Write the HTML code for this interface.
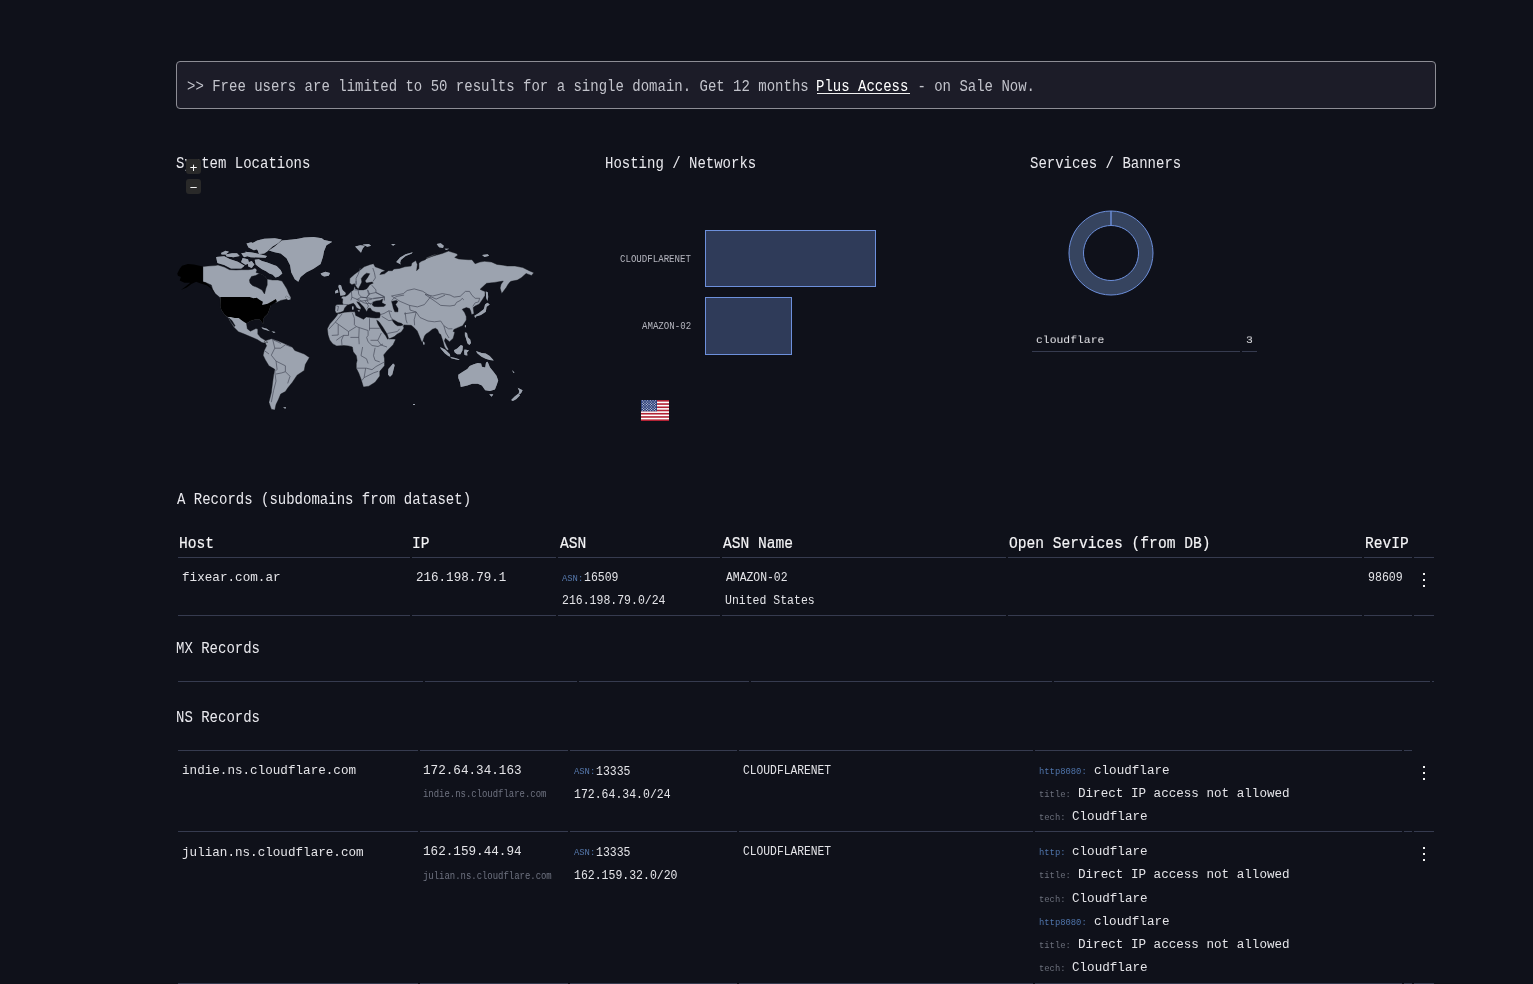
<!DOCTYPE html>
<html><head><meta charset="utf-8"><style>
html,body{margin:0;padding:0;background:#0f111a;width:1533px;height:984px;overflow:hidden;}
body{position:relative;font-family:"Liberation Mono",monospace;}
.t{position:absolute;white-space:pre;line-height:normal;will-change:transform;}
.l{position:absolute;}
.abs{position:absolute;}
.banner{position:absolute;left:176px;top:61px;width:1258px;height:46px;border:1px solid #8d8d95;border-radius:4px;background:#1c1c28;}
.bar{position:absolute;box-sizing:border-box;border:1px solid #6d90dc;background:#2f3b59;}
.zb{position:absolute;width:15px;height:15px;border-radius:3px;background:#292929;color:#fff;font-family:"Liberation Sans",sans-serif;font-size:13px;line-height:17px;text-align:center;z-index:5;}
</style></head><body>
<div class="banner"></div>
<svg class="abs" style="left:0;top:0" width="1533" height="984" viewBox="0 0 1533 984"><path d="M337.7,313.0 L336.1,313.0 L335.0,310.7 L335.3,306.0 L336.9,304.4 L343.2,304.4 L342.4,302.8 L342.8,298.9 L340.8,298.1 L342.8,296.2 L345.7,296.2 L347.7,295.1 L350.9,291.7 L353.5,289.9 L354.5,286.3 L355.3,287.5 L355.1,288.4 L358.2,289.7 L357.1,288.9 L359.2,289.9 L363.4,289.9 L366.5,288.9 L367.6,287.8 L369.7,284.7 L373.3,283.1 L371.8,282.1 L366.5,283.1 L365.0,281.0 L367.6,277.4 L369.7,273.7 L366.5,273.2 L363.9,275.3 L361.3,278.4 L361.8,282.1 L360.3,285.2 L358.2,289.2 L356.5,287.0 L355.6,285.7 L354.5,283.7 L351.9,284.7 L349.6,283.1 L349.8,278.4 L354.5,274.3 L359.4,270.7 L364.1,266.8 L370.4,264.4 L373.5,263.7 L375.1,266.8 L379.8,268.4 L385.3,270.7 L381.4,272.3 L379.8,274.6 L384.5,273.8 L388.4,270.7 L392.3,270.7 L393.9,269.1 L399.4,268.4 L404.8,266.8 L411.1,266.0 L411.9,262.9 L415.8,260.5 L417.4,264.4 L416.6,270.7 L418.9,268.4 L418.9,262.9 L421.3,261.3 L425.2,259.7 L426.8,257.4 L433.0,255.0 L438.5,253.5 L425.0,259.0 L431.3,256.6 L436.7,255.0 L442.2,253.5 L448.5,251.1 L456.3,253.5 L457.9,255.0 L454.7,257.4 L458.7,259.0 L468.1,259.7 L472.0,259.7 L475.1,263.7 L479.8,262.1 L484.5,261.3 L491.5,262.1 L497.0,264.4 L503.3,265.2 L507.2,266.0 L515.0,266.0 L522.8,267.6 L529.1,270.7 L533.8,272.7 L531.5,275.4 L526.0,273.4 L523.6,275.8 L521.3,277.7 L517.4,280.1 L511.1,281.3 L510.0,282.0 L508.0,284.5 L506.4,287.3 L504.0,290.5 L501.7,293.6 L500.1,288.1 L501.0,284.5 L503.3,281.0 L500.0,281.6 L494.7,282.4 L486.6,283.3 L480.1,289.3 L482.5,290.6 L485.0,291.4 L485.0,295.4 L482.5,299.5 L479.3,304.0 L475.2,306.0 L473.2,307.6 L473.6,310.9 L474.0,313.7 L471.5,314.6 L470.7,310.9 L469.5,308.5 L466.3,307.6 L462.2,309.3 L464.6,312.5 L466.3,316.6 L466.3,320.0 L465.7,321.0 L462.6,325.7 L458.4,327.4 L453.9,329.5 L453.1,331.5 L454.8,331.9 L453.9,335.6 L453.1,338.4 L449.5,341.7 L447.4,340.0 L445.4,338.2 L444.4,340.8 L447.0,346.5 L448.7,349.4 L447.4,350.2 L445.9,349.0 L444.4,346.5 L442.8,340.8 L440.7,334.5 L439.1,333.5 L437.6,329.8 L435.5,328.3 L432.4,329.3 L429.2,331.9 L426.1,334.0 L424.5,336.1 L422.4,342.4 L421.4,341.3 L419.3,336.1 L417.2,330.9 L415.7,329.3 L413.0,326.7 L411.1,325.3 L404.0,324.9 L403.3,326.4 L404.0,328.0 L401.3,331.9 L397.4,333.9 L394.3,336.6 L388.8,339.0 L394.3,339.0 L395.6,339.6 L393.1,344.7 L387.6,350.2 L383.7,354.9 L384.5,358.8 L384.5,365.8 L379.8,371.3 L379.8,376.0 L375.1,382.3 L368.8,386.2 L363.4,387.0 L361.0,379.1 L358.7,372.9 L356.3,368.2 L356.3,363.5 L357.1,360.4 L356.3,355.7 L353.2,351.7 L352.4,347.0 L348.5,345.9 L343.8,345.5 L336.7,345.9 L332.8,343.9 L329.7,340.0 L328.1,335.1 L327.3,328.8 L329.7,324.1 L334.4,318.7 L337.5,314.7Z M202.9,266.6 L208.0,266.0 L215.0,265.6 L218.0,265.0 L224.4,267.1 L229.6,269.7 L236.0,270.0 L242.0,269.7 L248.4,269.7 L252.6,269.2 L255.0,268.0 L257.0,270.0 L256.0,272.5 L259.4,273.4 L262.0,274.4 L265.0,276.5 L267.2,279.0 L272.4,280.0 L278.0,280.0 L282.0,281.0 L284.5,285.0 L287.0,289.0 L288.5,293.0 L291.2,298.1 L286.5,299.3 L280.7,300.4 L276.0,302.8 L273.9,300.7 L270.8,305.4 L269.2,310.0 L267.6,314.0 L264.5,317.1 L263.1,319.4 L263.3,324.1 L261.4,321.8 L259.8,319.4 L255.1,319.4 L250.4,321.0 L246.5,323.4 L247.3,328.8 L250.4,331.2 L255.9,328.5 L257.8,329.0 L257.8,334.1 L260.7,337.6 L264.8,340.0 L267.8,342.3 L264.0,343.0 L261.9,342.5 L257.2,339.5 L251.3,337.0 L244.3,334.1 L238.4,331.7 L233.7,327.0 L229.2,320.0 L228.5,317.9 L224.6,314.7 L221.4,310.0 L220.3,306.1 L219.9,297.5 L215.2,293.6 L212.8,289.7 L211.3,285.0 L206.1,282.8 L202.9,281.7Z M264.2,341.1 L271.3,338.8 L278.3,341.1 L284.2,343.5 L292.4,347.2 L294.8,350.5 L304.2,354.0 L309.4,357.6 L305.3,364.6 L304.2,370.5 L297.1,375.2 L292.4,382.2 L287.7,388.1 L285.4,391.6 L280.7,394.0 L278.3,399.8 L276.0,404.5 L274.8,410.1 L271.3,409.2 L268.9,402.2 L271.3,392.8 L272.5,383.4 L273.6,375.2 L274.8,369.3 L268.9,365.8 L265.4,359.9 L263.1,355.2 L264.2,350.5 L266.6,345.8Z" fill="#9ca3af" stroke="#0c0e15" stroke-width="0.4"/><path d="M337.7,313.0 L340.8,312.3 L343.6,311.0 L344.7,307.9 L347.1,305.2 L351.0,304.0 L353.4,303.2 L354.9,304.8 L356.5,307.5 L358.8,309.1 L360.6,309.5 L361.0,307.8 L358.0,303.5 L356.8,301.7 L359.0,302.3 L363.5,306.7 L365.1,309.1 L366.7,311.8 L368.2,308.5 L370.2,308.0 L372.1,310.7 L376.0,312.2 L379.6,312.6 L380.4,314.6 L379.6,317.7 L376.0,318.1 L372.1,317.7 L366.3,316.9 L363.5,319.3 L360.4,317.7 L355.7,315.4 L354.9,311.8 L350.6,311.8 L344.7,312.2 L338.9,313.8Z M372.1,304.8 L373.3,302.0 L376.0,300.9 L380.0,300.5 L382.7,298.9 L381.9,302.8 L385.8,304.8 L383.9,306.4 L378.0,306.7 L374.1,306.4Z M391.6,301.4 L396.3,300.4 L397.8,301.4 L395.6,304.5 L398.0,308.5 L398.0,311.8 L394.8,311.8 L393.3,307.9 L392.5,304.6Z M376.7,320.2 L379.0,321.7 L382.9,327.2 L387.2,334.3 L388.6,338.4 L387.6,339.2 L385.7,335.8 L381.7,330.4 L377.8,323.7Z M391.9,319.4 L394.3,320.2 L398.2,322.5 L401.3,323.3 L403.3,324.9 L400.5,325.7 L397.4,325.7 L395.0,324.1 L393.1,321.7Z M249.4,280.0 L251.5,276.5 L255.7,275.5 L259.4,273.4 L262.0,274.4 L265.0,276.5 L267.2,279.0 L267.2,285.0 L266.0,288.0 L264.5,294.0 L262.0,290.0 L257.5,287.5 L252.5,285.5 L250.0,283.0Z M232.0,320.6 L235.1,325.7 L234.4,326.5 L230.8,321.8 L228.9,317.9Z" fill="#0f111a" stroke="#0c0e15" stroke-width="0.4"/><path d="M216.1,257.0 L224.2,256.2 L229.6,258.9 L237.8,261.7 L244.6,265.7 L241.2,268.4 L231.0,268.4 L224.2,265.0 L217.4,263.1Z M225.4,254.5 L232.1,253.2 L237.0,253.2 L239.7,255.9 L233.6,257.2 L226.7,256.5Z M221.0,253.0 L225.6,250.7 L229.0,251.7 L225.6,254.5 L221.6,254.5Z M241.2,253.3 L246.8,252.5 L248.1,256.0 L244.0,257.3Z M242.6,258.0 L248.0,259.3 L249.3,263.4 L245.3,264.8 L241.1,262.0Z M247.7,262.5 L251.7,261.1 L254.4,264.5 L251.7,267.9 L248.3,266.6Z M245.3,251.7 L252.0,252.4 L267.0,255.9 L265.6,257.8 L250.6,257.2 L246.6,255.9Z M246.5,243.6 L251.2,242.2 L256.7,244.9 L258.1,249.0 L253.9,250.3 L248.5,247.6Z M252.5,242.9 L257.2,240.6 L264.2,238.8 L274.8,238.2 L281.8,239.4 L278.3,242.9 L272.5,246.4 L267.8,251.1 L264.2,253.5 L259.0,254.0 L257.5,250.0 L253.0,247.0Z M254.7,259.8 L258.8,259.3 L262.0,260.9 L267.2,262.4 L272.4,264.5 L276.6,266.1 L280.8,270.3 L282.3,273.4 L278.7,276.5 L275.5,277.6 L272.4,274.4 L269.3,273.4 L266.1,271.3 L262.0,269.2 L258.8,267.1 L255.7,264.5Z M268.9,250.5 L274.8,246.4 L281.8,240.6 L292.4,239.4 L298.3,238.8 L304.2,237.6 L313.5,237.0 L321.8,238.2 L324.1,240.0 L332.3,241.7 L326.5,245.3 L324.1,251.1 L322.9,257.0 L320.6,264.0 L313.5,268.7 L306.5,272.3 L300.6,277.0 L298.3,281.7 L294.8,279.3 L291.2,272.3 L290.1,265.2 L286.5,258.2 L280.7,253.5 L274.8,252.3Z M320.6,273.4 L325.3,271.7 L330.0,272.9 L328.8,275.8 L324.1,276.4 L321.8,275.2Z M286.4,296.0 L291.1,299.1 L288.0,300.0 L285.6,297.5Z M261.4,327.3 L266.8,328.8 L270.0,331.3 L267.6,330.6 L262.9,329.0Z M271.5,331.2 L275.5,332.0 L273.9,332.9Z M338.9,284.7 L341.0,285.2 L342.5,289.9 L345.7,293.1 L345.1,295.1 L340.4,295.7 L339.9,293.1 L339.4,289.9 L338.4,286.8Z M335.2,291.0 L337.8,289.4 L338.4,292.5 L335.2,293.6Z M352.0,306.5 L353.5,306.5 L353.5,309.5 L352.0,309.5Z M357.5,310.3 L360.0,310.5 L359.0,311.8Z M355.1,246.4 L360.2,245.3 L364.9,245.7 L362.6,248.8 L361.0,252.7 L357.9,249.6Z M362.6,244.5 L368.8,244.1 L371.2,245.7 L367.3,246.8Z M396.2,262.1 L400.1,257.4 L405.6,254.3 L412.7,252.3 L411.9,253.5 L405.6,256.0 L400.9,259.9 L400.1,262.9 L400.9,264.4Z M436.7,244.1 L440.7,243.3 L443.8,245.7 L443.0,248.0 L439.1,247.2Z M444.6,248.8 L449.3,248.8 L446.1,250.0Z M482.1,255.0 L487.6,254.3 L489.2,255.8 L484.5,257.0Z M391.1,244.1 L395.5,244.1 L393.1,245.7Z M485.0,304.4 L487.4,302.8 L489.8,304.4 L486.6,306.8 L485.8,311.7 L480.9,315.0 L476.0,316.6 L475.2,318.2 L474.4,315.8 L478.5,313.3 L483.7,309.3 L484.6,306.4Z M485.8,291.4 L487.8,292.2 L488.2,297.1 L487.4,301.1 L486.2,297.9Z M465.0,325.0 L466.1,325.4 L465.7,327.8 L464.8,326.5Z M464.9,332.3 L467.0,333.1 L467.8,337.2 L470.2,339.6 L471.0,342.9 L469.4,344.9 L467.4,343.3 L465.7,337.6 L464.9,335.6Z M422.8,341.3 L424.4,342.4 L424.6,344.5 L423.2,344.5Z M458.3,374.8 L463.2,371.6 L467.3,369.1 L469.7,365.9 L473.8,364.3 L477.8,363.0 L481.1,363.5 L481.9,366.7 L485.2,367.5 L486.0,362.6 L487.6,361.8 L490.0,367.5 L493.3,371.6 L496.5,375.7 L498.2,380.5 L496.5,385.4 L494.9,389.5 L490.0,391.1 L485.2,390.3 L481.9,385.4 L477.8,383.8 L472.2,383.8 L467.3,385.4 L460.8,387.0 L460.0,382.2 L458.3,378.1Z M489.2,394.3 L493.3,394.3 L491.7,396.8Z M517.7,387.8 L522.6,390.3 L520.9,393.5 L518.5,394.3 L519.3,391.1Z M511.2,400.0 L514.4,396.8 L518.5,393.5 L520.1,395.2 L516.1,399.2 L512.8,400.9Z M475.9,351.0 L481.6,353.0 L485.7,353.5 L489.7,355.9 L493.8,360.4 L489.7,360.0 L485.7,358.7 L481.6,356.7 L477.5,353.5Z M453.9,350.2 L457.2,348.6 L460.9,344.9 L462.9,346.1 L462.5,350.2 L460.4,354.3 L457.2,354.3 L454.8,352.6Z M445.0,349.4 L447.4,351.8 L449.9,354.3 L450.3,356.7 L448.3,355.9 L445.0,353.5 L441.0,349.0 L440.0,347.0Z M450.7,357.1 L455.2,357.9 L459.6,359.6 L458.8,360.0 L453.1,358.7 L450.7,357.9Z M464.5,349.4 L469.0,350.2 L467.0,352.6 L467.4,355.5 L464.5,355.1 L464.1,351.8Z M388.4,369.0 L393.1,363.5 L394.7,365.0 L392.3,374.4 L390.0,376.8 L388.0,374.4Z M283.0,407.5 L286.0,406.9 L285.4,408.8Z M413.0,404.0 L415.0,404.0 L415.0,405.0 L413.0,405.0Z M512.0,370.0 L514.5,372.5 L513.5,373.0Z" fill="#9ca3af" stroke="#0c0e15" stroke-width="0.4"/><path d="M216.1,257.0 L224.2,256.2 L229.6,258.9 L237.8,261.7 L244.6,265.7 L241.2,268.4 L231.0,268.4 L224.2,265.0 L217.4,263.1Z M225.4,254.5 L232.1,253.2 L237.0,253.2 L239.7,255.9 L233.6,257.2 L226.7,256.5Z M221.0,253.0 L225.6,250.7 L229.0,251.7 L225.6,254.5 L221.6,254.5Z M241.2,253.3 L246.8,252.5 L248.1,256.0 L244.0,257.3Z M242.6,258.0 L248.0,259.3 L249.3,263.4 L245.3,264.8 L241.1,262.0Z M247.7,262.5 L251.7,261.1 L254.4,264.5 L251.7,267.9 L248.3,266.6Z M245.3,251.7 L252.0,252.4 L267.0,255.9 L265.6,257.8 L250.6,257.2 L246.6,255.9Z M246.5,243.6 L251.2,242.2 L256.7,244.9 L258.1,249.0 L253.9,250.3 L248.5,247.6Z M252.5,242.9 L257.2,240.6 L264.2,238.8 L274.8,238.2 L281.8,239.4 L278.3,242.9 L272.5,246.4 L267.8,251.1 L264.2,253.5 L259.0,254.0 L257.5,250.0 L253.0,247.0Z M254.7,259.8 L258.8,259.3 L262.0,260.9 L267.2,262.4 L272.4,264.5 L276.6,266.1 L280.8,270.3 L282.3,273.4 L278.7,276.5 L275.5,277.6 L272.4,274.4 L269.3,273.4 L266.1,271.3 L262.0,269.2 L258.8,267.1 L255.7,264.5Z M268.9,250.5 L274.8,246.4 L281.8,240.6 L292.4,239.4 L298.3,238.8 L304.2,237.6 L313.5,237.0 L321.8,238.2 L324.1,240.0 L332.3,241.7 L326.5,245.3 L324.1,251.1 L322.9,257.0 L320.6,264.0 L313.5,268.7 L306.5,272.3 L300.6,277.0 L298.3,281.7 L294.8,279.3 L291.2,272.3 L290.1,265.2 L286.5,258.2 L280.7,253.5 L274.8,252.3Z M320.6,273.4 L325.3,271.7 L330.0,272.9 L328.8,275.8 L324.1,276.4 L321.8,275.2Z M286.4,296.0 L291.1,299.1 L288.0,300.0 L285.6,297.5Z M261.4,327.3 L266.8,328.8 L270.0,331.3 L267.6,330.6 L262.9,329.0Z M271.5,331.2 L275.5,332.0 L273.9,332.9Z M338.9,284.7 L341.0,285.2 L342.5,289.9 L345.7,293.1 L345.1,295.1 L340.4,295.7 L339.9,293.1 L339.4,289.9 L338.4,286.8Z M335.2,291.0 L337.8,289.4 L338.4,292.5 L335.2,293.6Z M352.0,306.5 L353.5,306.5 L353.5,309.5 L352.0,309.5Z M357.5,310.3 L360.0,310.5 L359.0,311.8Z M355.1,246.4 L360.2,245.3 L364.9,245.7 L362.6,248.8 L361.0,252.7 L357.9,249.6Z M362.6,244.5 L368.8,244.1 L371.2,245.7 L367.3,246.8Z M396.2,262.1 L400.1,257.4 L405.6,254.3 L412.7,252.3 L411.9,253.5 L405.6,256.0 L400.9,259.9 L400.1,262.9 L400.9,264.4Z M436.7,244.1 L440.7,243.3 L443.8,245.7 L443.0,248.0 L439.1,247.2Z M444.6,248.8 L449.3,248.8 L446.1,250.0Z M482.1,255.0 L487.6,254.3 L489.2,255.8 L484.5,257.0Z M391.1,244.1 L395.5,244.1 L393.1,245.7Z M485.0,304.4 L487.4,302.8 L489.8,304.4 L486.6,306.8 L485.8,311.7 L480.9,315.0 L476.0,316.6 L475.2,318.2 L474.4,315.8 L478.5,313.3 L483.7,309.3 L484.6,306.4Z M485.8,291.4 L487.8,292.2 L488.2,297.1 L487.4,301.1 L486.2,297.9Z M465.0,325.0 L466.1,325.4 L465.7,327.8 L464.8,326.5Z M464.9,332.3 L467.0,333.1 L467.8,337.2 L470.2,339.6 L471.0,342.9 L469.4,344.9 L467.4,343.3 L465.7,337.6 L464.9,335.6Z M422.8,341.3 L424.4,342.4 L424.6,344.5 L423.2,344.5Z M458.3,374.8 L463.2,371.6 L467.3,369.1 L469.7,365.9 L473.8,364.3 L477.8,363.0 L481.1,363.5 L481.9,366.7 L485.2,367.5 L486.0,362.6 L487.6,361.8 L490.0,367.5 L493.3,371.6 L496.5,375.7 L498.2,380.5 L496.5,385.4 L494.9,389.5 L490.0,391.1 L485.2,390.3 L481.9,385.4 L477.8,383.8 L472.2,383.8 L467.3,385.4 L460.8,387.0 L460.0,382.2 L458.3,378.1Z M489.2,394.3 L493.3,394.3 L491.7,396.8Z M517.7,387.8 L522.6,390.3 L520.9,393.5 L518.5,394.3 L519.3,391.1Z M511.2,400.0 L514.4,396.8 L518.5,393.5 L520.1,395.2 L516.1,399.2 L512.8,400.9Z M475.9,351.0 L481.6,353.0 L485.7,353.5 L489.7,355.9 L493.8,360.4 L489.7,360.0 L485.7,358.7 L481.6,356.7 L477.5,353.5Z M453.9,350.2 L457.2,348.6 L460.9,344.9 L462.9,346.1 L462.5,350.2 L460.4,354.3 L457.2,354.3 L454.8,352.6Z M445.0,349.4 L447.4,351.8 L449.9,354.3 L450.3,356.7 L448.3,355.9 L445.0,353.5 L441.0,349.0 L440.0,347.0Z M450.7,357.1 L455.2,357.9 L459.6,359.6 L458.8,360.0 L453.1,358.7 L450.7,357.9Z M464.5,349.4 L469.0,350.2 L467.0,352.6 L467.4,355.5 L464.5,355.1 L464.1,351.8Z M388.4,369.0 L393.1,363.5 L394.7,365.0 L392.3,374.4 L390.0,376.8 L388.0,374.4Z M283.0,407.5 L286.0,406.9 L285.4,408.8Z M413.0,404.0 L415.0,404.0 L415.0,405.0 L413.0,405.0Z M512.0,370.0 L514.5,372.5 L513.5,373.0Z" fill="#9ca3af"/><path d="M177.3,273.4 L179.7,268.7 L182.0,265.8 L187.9,264.0 L193.8,264.6 L202.9,266.6 L202.9,281.7 L206.1,282.8 L210.2,286.4 L213.7,291.1 L214.9,293.4 L211.4,288.7 L206.7,285.2 L200.8,283.4 L196.1,281.7 L191.4,284.0 L186.7,287.5 L180.9,289.9 L185.6,286.4 L190.3,282.8 L184.4,282.8 L179.7,280.5 L180.9,277.0 L177.9,275.8Z M220.3,297.1 L249.6,297.1 L253.5,298.3 L256.7,297.7 L259.8,300.0 L262.9,301.8 L262.1,305.0 L267.6,303.8 L273.1,300.7 L275.8,299.1 L277.0,301.4 L273.9,303.2 L270.8,305.5 L269.2,310.0 L267.6,314.0 L264.5,317.1 L263.1,319.4 L263.3,324.1 L261.4,321.8 L259.8,319.4 L255.1,319.4 L250.4,321.0 L246.5,323.4 L242.6,321.0 L238.7,317.9 L234.7,317.9 L230.8,317.1 L227.7,317.1 L224.6,314.7 L221.4,310.0 L220.3,306.1Z" fill="#000000"/><path d="M342.1,313.9 L335.3,322.2 L328.9,329.1 M335.3,322.2 L348.5,331.5 L356.3,326.6 M352.4,312.9 L354.4,318.3 L354.4,324.7 L356.3,326.6 L359.2,327.6 L368.1,330.5 M369.5,318.3 L369.5,330.5 M369.5,328.3 L379.8,328.3 M368.1,330.5 L368.1,335.4 L366.6,337.4 L368.1,341.8 M359.2,327.6 L358.8,337.4 L359.2,344.2 M338.2,324.7 L338.2,335.0 L331.8,335.4 M348.5,331.5 L348.5,335.4 L343.6,335.4 L340.3,337.4 L336.3,340.3 M343.6,335.4 L341.5,340.0 L342.0,345.5 M350.4,337.4 L358.8,337.4 M381.3,333.0 L377.8,340.3 L370.5,340.3 M368.1,341.8 L372.0,345.5 L378.0,346.5 L383.0,344.0 M377.8,340.3 L381.0,345.0 L387.0,347.0 M362.6,347.0 L361.0,355.7 L366.5,358.8 L368.1,363.5 M356.3,368.2 L366.5,368.2 L372.0,369.7 L375.9,366.6 L384.5,361.9 M365.7,368.2 L364.1,377.6 L361.8,380.7 M364.1,377.6 L373.5,372.9 L378.2,371.3 M375.1,347.8 L373.5,355.7 L375.1,360.4 L379.8,361.9 M381.7,316.3 L388.8,320.6 L392.7,320.2 M388.8,310.8 L391.1,317.8 L393.5,319.8 M380.4,314.6 L384.0,313.5 L388.8,310.8 L392.0,311.5 M405.2,312.3 L406.0,319.8 L407.2,323.3 M416.2,312.0 L414.2,319.8 L414.6,325.3 M404.0,313.9 L409.0,313.1 L416.2,312.0 M387.2,333.5 L397.4,331.5 L399.7,328.8 M416.2,312.0 L420.0,317.5 L428.0,321.0 L434.4,321.8 M391.5,296.0 L403.3,293.6 L407.2,290.5 L414.2,288.9 L422.8,291.3 L430.7,296.7 L436.2,299.1 L445.0,295.2 M391.5,296.0 L400.1,301.4 L409.5,305.4 L417.4,306.9 L424.4,304.6 L430.7,296.7 M409.5,305.4 L410.0,310.0 L416.2,312.0 M425.0,294.4 L432.8,296.0 L442.2,293.6 L450.0,295.0 L454.1,297.1 L460.2,296.3 L465.4,291.4 L469.5,291.4 L472.0,295.4 L475.2,298.3 L479.7,298.3 L478.5,302.0 L475.2,302.8 L472.8,306.4 M425.0,294.4 L435.2,301.4 L440.7,305.4 L450.0,306.0 L454.9,305.2 L456.5,302.4 L460.6,300.3 L462.2,298.3 L463.8,299.9 M434.4,321.8 L440.7,321.0 L443.8,325.7 L448.5,328.8 L452.4,328.8 M443.8,325.7 L446.0,333.0 L449.0,338.0 M360.3,268.0 L358.2,274.3 L356.1,278.4 L356.1,283.7 L355.1,285.2 M372.8,268.0 L374.4,272.7 L375.4,277.9 L372.8,281.6 M371.8,285.2 L375.9,289.9 L375.9,292.5 L384.3,296.7 L384.3,300.4 M358.2,289.9 L358.7,294.1 L361.3,297.2 M367.6,289.9 L368.6,294.6 L366.5,297.7 M351.4,291.5 L351.9,297.2 L350.9,300.4 M361.3,297.2 L366.5,297.7 L373.0,298.8 L384.3,297.0 M343.2,304.4 L348.0,304.6 M336.5,306.0 L338.5,306.5 L337.5,311.0 M356.5,299.5 L360.0,300.0 L363.0,302.5 L366.5,303.5 L371.0,303.5 M365.0,300.5 L368.5,306.0 L367.0,308.5 M272.5,338.8 L274.8,348.2 L271.3,355.2 L276.0,361.1 L277.1,369.3 L274.8,371.7 L276.0,381.1 L273.6,390.4 L271.3,402.2 M274.8,348.2 L280.7,348.2 L285.4,344.7 L291.2,347.0 M276.0,361.1 L285.4,365.8 L285.4,371.7 L290.0,376.3 L287.7,383.4 M276.0,374.0 L281.8,372.9 L285.4,371.7 M264.2,350.5 L269.0,354.0 M273.5,340.0 L277.0,341.5 L281.0,343.5 M361.3,297.2 L366.5,297.7 L369.7,294.1 L367.6,289.9 M368.6,294.1 L375.9,292.5 M375.9,292.5 L384.3,296.7 L384.3,300.4 M351.9,297.2 L357.1,299.3 L361.3,297.2 M357.1,299.3 L359.2,301.4 L366.5,300.4 L371.8,299.3 M366.5,300.4 L370.7,304.5 L373.3,301.4 M366.5,297.7 L367.6,300.4 M373.3,298.3 L384.3,297.2 M356.1,281.0 L356.1,285.2 M354.5,289.9 L358.2,289.9 M391.6,300.4 L395.2,297.2 L397.8,296.2 L404.1,295.1" fill="none" stroke="#474c5a" stroke-width="0.7" stroke-linejoin="round"/></svg>
<div class="t" style="left:186.71px;top:79.14px;font-size:14px;color:#c2c3cb;transform:scaleY(1.17);transform-origin:0 11.66px;">&gt;&gt; Free users are limited to 50 results for a single domain. Get 12 months </div>
<div class="t" style="left:816.21px;top:79.14px;font-size:14px;color:#ffffff;transform:scaleY(1.17);transform-origin:0 11.66px;">Plus Access</div>
<div class="l" style="left:816.5px;top:93px;width:93.0px;height:1px;background:#f0f0f0"></div>
<div class="t" style="left:908.61px;top:79.14px;font-size:14px;color:#c2c3cb;transform:scaleY(1.17);transform-origin:0 11.66px;"> - on Sale Now.</div>
<div class="t" style="left:175.96px;top:156.34px;font-size:14px;color:#e9e9ee;transform:scaleY(1.17);transform-origin:0 11.66px;">System Locations</div>
<div class="t" style="left:604.69px;top:156.34px;font-size:14px;color:#e9e9ee;transform:scaleY(1.17);transform-origin:0 11.66px;">Hosting / Networks</div>
<div class="t" style="left:1030.26px;top:156.34px;font-size:14px;color:#e9e9ee;transform:scaleY(1.17);transform-origin:0 11.66px;">Services / Banners</div>
<div class="t" style="left:176.50px;top:491.64px;font-size:14px;color:#e9e9ee;transform:scaleY(1.17);transform-origin:0 11.66px;">A Records (subdomains from dataset)</div>
<div class="t" style="left:175.92px;top:641.34px;font-size:14px;color:#e9e9ee;transform:scaleY(1.17);transform-origin:0 11.66px;">MX Records</div>
<div class="t" style="left:175.69px;top:710.34px;font-size:14px;color:#e9e9ee;transform:scaleY(1.17);transform-origin:0 11.66px;">NS Records</div>
<div class="t" style="left:620.48px;top:254.02px;font-size:9.1px;color:#b3b4bd;transform:scaleY(1.15);transform-origin:0 7.58px;">CLOUDFLARENET</div>
<div class="t" style="left:642.32px;top:321.02px;font-size:9.1px;color:#b3b4bd;transform:scaleY(1.15);transform-origin:0 7.58px;">AMAZON-02</div>
<div class="bar" style="left:705px;top:230px;width:171px;height:57px"></div>
<div class="bar" style="left:705px;top:297px;width:87px;height:58px"></div>
<svg class="abs" style="left:641px;top:400px" width="28" height="21" viewBox="0 0 28 21"><rect width="28" height="21" fill="#fff"/><rect x="0" y="0.000" width="28" height="1.615" fill="#b22234"/><rect x="0" y="3.231" width="28" height="1.615" fill="#b22234"/><rect x="0" y="6.462" width="28" height="1.615" fill="#b22234"/><rect x="0" y="9.692" width="28" height="1.615" fill="#b22234"/><rect x="0" y="12.923" width="28" height="1.615" fill="#b22234"/><rect x="0" y="16.154" width="28" height="1.615" fill="#b22234"/><rect x="0" y="19.385" width="28" height="1.615" fill="#b22234"/><rect width="16" height="11.308" fill="#2a3d7a"/><circle cx="1.33" cy="0.63" r="0.5" fill="#fff"/><circle cx="4.00" cy="0.63" r="0.5" fill="#fff"/><circle cx="6.67" cy="0.63" r="0.5" fill="#fff"/><circle cx="9.34" cy="0.63" r="0.5" fill="#fff"/><circle cx="12.01" cy="0.63" r="0.5" fill="#fff"/><circle cx="14.68" cy="0.63" r="0.5" fill="#fff"/><circle cx="2.66" cy="1.89" r="0.5" fill="#fff"/><circle cx="5.33" cy="1.89" r="0.5" fill="#fff"/><circle cx="8.00" cy="1.89" r="0.5" fill="#fff"/><circle cx="10.67" cy="1.89" r="0.5" fill="#fff"/><circle cx="13.34" cy="1.89" r="0.5" fill="#fff"/><circle cx="1.33" cy="3.15" r="0.5" fill="#fff"/><circle cx="4.00" cy="3.15" r="0.5" fill="#fff"/><circle cx="6.67" cy="3.15" r="0.5" fill="#fff"/><circle cx="9.34" cy="3.15" r="0.5" fill="#fff"/><circle cx="12.01" cy="3.15" r="0.5" fill="#fff"/><circle cx="14.68" cy="3.15" r="0.5" fill="#fff"/><circle cx="2.66" cy="4.41" r="0.5" fill="#fff"/><circle cx="5.33" cy="4.41" r="0.5" fill="#fff"/><circle cx="8.00" cy="4.41" r="0.5" fill="#fff"/><circle cx="10.67" cy="4.41" r="0.5" fill="#fff"/><circle cx="13.34" cy="4.41" r="0.5" fill="#fff"/><circle cx="1.33" cy="5.67" r="0.5" fill="#fff"/><circle cx="4.00" cy="5.67" r="0.5" fill="#fff"/><circle cx="6.67" cy="5.67" r="0.5" fill="#fff"/><circle cx="9.34" cy="5.67" r="0.5" fill="#fff"/><circle cx="12.01" cy="5.67" r="0.5" fill="#fff"/><circle cx="14.68" cy="5.67" r="0.5" fill="#fff"/><circle cx="2.66" cy="6.93" r="0.5" fill="#fff"/><circle cx="5.33" cy="6.93" r="0.5" fill="#fff"/><circle cx="8.00" cy="6.93" r="0.5" fill="#fff"/><circle cx="10.67" cy="6.93" r="0.5" fill="#fff"/><circle cx="13.34" cy="6.93" r="0.5" fill="#fff"/><circle cx="1.33" cy="8.19" r="0.5" fill="#fff"/><circle cx="4.00" cy="8.19" r="0.5" fill="#fff"/><circle cx="6.67" cy="8.19" r="0.5" fill="#fff"/><circle cx="9.34" cy="8.19" r="0.5" fill="#fff"/><circle cx="12.01" cy="8.19" r="0.5" fill="#fff"/><circle cx="14.68" cy="8.19" r="0.5" fill="#fff"/><circle cx="2.66" cy="9.45" r="0.5" fill="#fff"/><circle cx="5.33" cy="9.45" r="0.5" fill="#fff"/><circle cx="8.00" cy="9.45" r="0.5" fill="#fff"/><circle cx="10.67" cy="9.45" r="0.5" fill="#fff"/><circle cx="13.34" cy="9.45" r="0.5" fill="#fff"/><circle cx="1.33" cy="10.71" r="0.5" fill="#fff"/><circle cx="4.00" cy="10.71" r="0.5" fill="#fff"/><circle cx="6.67" cy="10.71" r="0.5" fill="#fff"/><circle cx="9.34" cy="10.71" r="0.5" fill="#fff"/><circle cx="12.01" cy="10.71" r="0.5" fill="#fff"/><circle cx="14.68" cy="10.71" r="0.5" fill="#fff"/></svg>
<svg class="abs" style="left:1060px;top:202px" width="102" height="102" viewBox="0 0 102 102"><path fill-rule="evenodd" fill="#36445f" stroke="#6d90dc" stroke-width="1" d="M51 9 A42 42 0 1 1 50.99 9 Z M51 23.5 A27.5 27.5 0 1 0 51.01 23.5 Z"/><line x1="51" y1="9" x2="51" y2="23.5" stroke="#6d90dc" stroke-width="1.4"/></svg>
<div class="t" style="left:1036.08px;top:334.11px;font-size:11.4px;color:#e6e6ea;transform:scaleY(0.95);transform-origin:0 9.49px;">cloudflare</div>
<div class="t" style="left:1245.79px;top:334.11px;font-size:11.4px;color:#e6e6ea;transform:scaleY(0.95);transform-origin:0 9.49px;">3</div>
<div class="l" style="left:1032px;top:351px;width:208px;height:1px;background:#363b4f"></div>
<div class="l" style="left:1242px;top:351px;width:15px;height:1px;background:#363b4f"></div>
<div class="zb" style="left:186px;top:159px">+</div>
<div class="zb" style="left:186px;top:179px">&minus;</div>
<div class="t" style="left:178.85px;top:535.85px;font-size:14.6px;color:#f4f4f6;transform:scaleY(1.13);transform-origin:0 12.15px;-webkit-text-stroke:0.15px #f4f4f6;">Host</div>
<div class="t" style="left:412.46px;top:535.85px;font-size:14.6px;color:#f4f4f6;transform:scaleY(1.13);transform-origin:0 12.15px;-webkit-text-stroke:0.15px #f4f4f6;">IP</div>
<div class="t" style="left:559.80px;top:535.85px;font-size:14.6px;color:#f4f4f6;transform:scaleY(1.13);transform-origin:0 12.15px;-webkit-text-stroke:0.15px #f4f4f6;">ASN</div>
<div class="t" style="left:722.90px;top:535.85px;font-size:14.6px;color:#f4f4f6;transform:scaleY(1.13);transform-origin:0 12.15px;-webkit-text-stroke:0.15px #f4f4f6;">ASN Name</div>
<div class="t" style="left:1009.27px;top:535.85px;font-size:14.6px;color:#f4f4f6;transform:scaleY(1.13);transform-origin:0 12.15px;-webkit-text-stroke:0.15px #f4f4f6;">Open Services (from DB)</div>
<div class="t" style="left:1365.15px;top:535.85px;font-size:14.6px;color:#f4f4f6;transform:scaleY(1.13);transform-origin:0 12.15px;-webkit-text-stroke:0.15px #f4f4f6;">RevIP</div>
<div class="l" style="left:178px;top:557px;width:232px;height:1px;background:#363b4f"></div>
<div class="l" style="left:412px;top:557px;width:144px;height:1px;background:#363b4f"></div>
<div class="l" style="left:558px;top:557px;width:162px;height:1px;background:#363b4f"></div>
<div class="l" style="left:722px;top:557px;width:284px;height:1px;background:#363b4f"></div>
<div class="l" style="left:1008px;top:557px;width:354px;height:1px;background:#363b4f"></div>
<div class="l" style="left:1364px;top:557px;width:48px;height:1px;background:#363b4f"></div>
<div class="l" style="left:1414px;top:557px;width:20px;height:1px;background:#363b4f"></div>
<div class="l" style="left:178px;top:615px;width:232px;height:1px;background:#363b4f"></div>
<div class="l" style="left:412px;top:615px;width:144px;height:1px;background:#363b4f"></div>
<div class="l" style="left:558px;top:615px;width:162px;height:1px;background:#363b4f"></div>
<div class="l" style="left:722px;top:615px;width:284px;height:1px;background:#363b4f"></div>
<div class="l" style="left:1008px;top:615px;width:354px;height:1px;background:#363b4f"></div>
<div class="l" style="left:1364px;top:615px;width:48px;height:1px;background:#363b4f"></div>
<div class="l" style="left:1414px;top:615px;width:20px;height:1px;background:#363b4f"></div>
<div class="t" style="left:181.65px;top:570.47px;font-size:12.65px;color:#e4e4e8;transform:scaleY(1.05);transform-origin:0 10.53px;">fixear.com.ar</div>
<div class="t" style="left:415.92px;top:571.05px;font-size:12.55px;color:#e4e4e8;transform:scaleY(1.05);transform-origin:0 10.45px;">216.198.79.1</div>
<div class="t" style="left:562.00px;top:573.65px;font-size:8.83px;color:#5577aa;transform:scaleY(1.12);transform-origin:0 7.35px;">ASN:</div>
<div class="t" style="left:583.69px;top:571.43px;font-size:11.5px;color:#e4e4e8;transform:scaleY(1.08);transform-origin:0 9.57px;">16509</div>
<div class="t" style="left:561.89px;top:594.43px;font-size:11.5px;color:#e4e4e8;transform:scaleY(1.08);transform-origin:0 9.57px;">216.198.79.0/24</div>
<div class="t" style="left:726.00px;top:571.51px;font-size:11.4px;color:#e4e4e8;transform:scaleY(1.08);transform-origin:0 9.49px;">AMAZON-02</div>
<div class="t" style="left:725.20px;top:594.43px;font-size:11.5px;color:#e4e4e8;transform:scaleY(1.08);transform-origin:0 9.57px;">United States</div>
<div class="t" style="left:1367.80px;top:571.34px;font-size:11.6px;color:#e4e4e8;transform:scaleY(1.08);transform-origin:0 9.66px;">98609</div>
<div class="l" style="left:1423px;top:573px;width:2px;height:2px;background:#f2f2f2"></div>
<div class="l" style="left:1423px;top:579px;width:2px;height:2px;background:#f2f2f2"></div>
<div class="l" style="left:1423px;top:585px;width:2px;height:2px;background:#f2f2f2"></div>
<div class="l" style="left:178px;top:681px;width:245px;height:1px;background:#363b4f"></div>
<div class="l" style="left:425px;top:681px;width:152px;height:1px;background:#363b4f"></div>
<div class="l" style="left:579px;top:681px;width:170px;height:1px;background:#363b4f"></div>
<div class="l" style="left:751px;top:681px;width:301px;height:1px;background:#363b4f"></div>
<div class="l" style="left:1054px;top:681px;width:376px;height:1px;background:#363b4f"></div>
<div class="l" style="left:1432px;top:681px;width:2px;height:1px;background:#363b4f"></div>
<div class="l" style="left:178px;top:750px;width:240px;height:1px;background:#363b4f"></div>
<div class="l" style="left:420px;top:750px;width:148px;height:1px;background:#363b4f"></div>
<div class="l" style="left:570px;top:750px;width:167px;height:1px;background:#363b4f"></div>
<div class="l" style="left:739px;top:750px;width:294px;height:1px;background:#363b4f"></div>
<div class="l" style="left:1035px;top:750px;width:367px;height:1px;background:#363b4f"></div>
<div class="l" style="left:1404px;top:750px;width:8px;height:1px;background:#363b4f"></div>
<div class="l" style="left:178px;top:831px;width:240px;height:1px;background:#363b4f"></div>
<div class="l" style="left:420px;top:831px;width:148px;height:1px;background:#363b4f"></div>
<div class="l" style="left:570px;top:831px;width:167px;height:1px;background:#363b4f"></div>
<div class="l" style="left:739px;top:831px;width:294px;height:1px;background:#363b4f"></div>
<div class="l" style="left:1035px;top:831px;width:367px;height:1px;background:#363b4f"></div>
<div class="l" style="left:1404px;top:831px;width:8px;height:1px;background:#363b4f"></div>
<div class="l" style="left:1414px;top:831px;width:20px;height:1px;background:#363b4f"></div>
<div class="l" style="left:178px;top:983px;width:240px;height:1px;background:#363b4f"></div>
<div class="l" style="left:420px;top:983px;width:148px;height:1px;background:#363b4f"></div>
<div class="l" style="left:570px;top:983px;width:167px;height:1px;background:#363b4f"></div>
<div class="l" style="left:739px;top:983px;width:294px;height:1px;background:#363b4f"></div>
<div class="l" style="left:1035px;top:983px;width:367px;height:1px;background:#363b4f"></div>
<div class="l" style="left:1404px;top:983px;width:8px;height:1px;background:#363b4f"></div>
<div class="l" style="left:1414px;top:983px;width:20px;height:1px;background:#363b4f"></div>
<div class="t" style="left:181.92px;top:763.09px;font-size:12.62px;color:#e4e4e8;transform:scaleY(1.05);transform-origin:0 10.51px;">indie.ns.cloudflare.com</div>
<div class="t" style="left:423.19px;top:763.27px;font-size:12.65px;color:#e4e4e8;transform:scaleY(1.05);transform-origin:0 10.53px;">172.64.34.163</div>
<div class="t" style="left:423.38px;top:789.85px;font-size:8.95px;color:#6f7381;transform:scaleY(1.12);transform-origin:0 7.45px;">indie.ns.cloudflare.com</div>
<div class="t" style="left:574.20px;top:767.25px;font-size:8.83px;color:#5577aa;transform:scaleY(1.12);transform-origin:0 7.35px;">ASN:</div>
<div class="t" style="left:595.89px;top:765.03px;font-size:11.5px;color:#e4e4e8;transform:scaleY(1.08);transform-origin:0 9.57px;">13335</div>
<div class="t" style="left:573.87px;top:787.73px;font-size:11.5px;color:#e4e4e8;transform:scaleY(1.08);transform-origin:0 9.57px;">172.64.34.0/24</div>
<div class="t" style="left:742.58px;top:764.59px;font-size:11.3px;color:#e4e4e8;transform:scaleY(1.06);transform-origin:0 9.41px;">CLOUDFLARENET</div>
<div class="l" style="left:1423px;top:766px;width:2px;height:2px;background:#f2f2f2"></div>
<div class="l" style="left:1423px;top:772px;width:2px;height:2px;background:#f2f2f2"></div>
<div class="l" style="left:1423px;top:778px;width:2px;height:2px;background:#f2f2f2"></div>
<div class="t" style="left:182.08px;top:844.69px;font-size:12.62px;color:#e4e4e8;transform:scaleY(1.05);transform-origin:0 10.51px;">julian.ns.cloudflare.com</div>
<div class="t" style="left:423.19px;top:844.27px;font-size:12.65px;color:#e4e4e8;transform:scaleY(1.05);transform-origin:0 10.53px;">162.159.44.94</div>
<div class="t" style="left:423.49px;top:871.55px;font-size:8.95px;color:#6f7381;transform:scaleY(1.12);transform-origin:0 7.45px;">julian.ns.cloudflare.com</div>
<div class="t" style="left:574.20px;top:848.05px;font-size:8.83px;color:#5577aa;transform:scaleY(1.12);transform-origin:0 7.35px;">ASN:</div>
<div class="t" style="left:595.89px;top:845.83px;font-size:11.5px;color:#e4e4e8;transform:scaleY(1.08);transform-origin:0 9.57px;">13335</div>
<div class="t" style="left:573.87px;top:869.43px;font-size:11.5px;color:#e4e4e8;transform:scaleY(1.08);transform-origin:0 9.57px;">162.159.32.0/20</div>
<div class="t" style="left:742.58px;top:845.59px;font-size:11.3px;color:#e4e4e8;transform:scaleY(1.06);transform-origin:0 9.41px;">CLOUDFLARENET</div>
<div class="l" style="left:1423px;top:847px;width:2px;height:2px;background:#f2f2f2"></div>
<div class="l" style="left:1423px;top:853px;width:2px;height:2px;background:#f2f2f2"></div>
<div class="l" style="left:1423px;top:859px;width:2px;height:2px;background:#f2f2f2"></div>
<div class="t" style="left:1038.60px;top:766.65px;font-size:8.83px;color:#4f74aa;transform:scaleY(1.05);transform-origin:0 7.35px;">http8080:</div>
<div class="t" style="left:1093.58px;top:763.51px;font-size:12.6px;color:#e4e4e8;transform:scaleY(1.02);transform-origin:0 10.49px;">cloudflare</div>
<div class="t" style="left:1038.58px;top:789.65px;font-size:8.83px;color:#6c707c;transform:scaleY(1.05);transform-origin:0 7.35px;">title:</div>
<div class="t" style="left:1077.67px;top:786.51px;font-size:12.6px;color:#e4e4e8;transform:scaleY(1.02);transform-origin:0 10.49px;">Direct IP access not allowed</div>
<div class="t" style="left:1038.58px;top:813.15px;font-size:8.83px;color:#6c707c;transform:scaleY(1.05);transform-origin:0 7.35px;">tech:</div>
<div class="t" style="left:1072.37px;top:810.01px;font-size:12.6px;color:#e4e4e8;transform:scaleY(1.02);transform-origin:0 10.49px;">Cloudflare</div>
<div class="t" style="left:1038.60px;top:847.65px;font-size:8.83px;color:#4f74aa;transform:scaleY(1.05);transform-origin:0 7.35px;">http:</div>
<div class="t" style="left:1072.39px;top:844.51px;font-size:12.6px;color:#e4e4e8;transform:scaleY(1.02);transform-origin:0 10.49px;">cloudflare</div>
<div class="t" style="left:1038.58px;top:871.35px;font-size:8.83px;color:#6c707c;transform:scaleY(1.05);transform-origin:0 7.35px;">title:</div>
<div class="t" style="left:1077.67px;top:868.21px;font-size:12.6px;color:#e4e4e8;transform:scaleY(1.02);transform-origin:0 10.49px;">Direct IP access not allowed</div>
<div class="t" style="left:1038.58px;top:894.65px;font-size:8.83px;color:#6c707c;transform:scaleY(1.05);transform-origin:0 7.35px;">tech:</div>
<div class="t" style="left:1072.37px;top:891.51px;font-size:12.6px;color:#e4e4e8;transform:scaleY(1.02);transform-origin:0 10.49px;">Cloudflare</div>
<div class="t" style="left:1038.60px;top:917.65px;font-size:8.83px;color:#4f74aa;transform:scaleY(1.05);transform-origin:0 7.35px;">http8080:</div>
<div class="t" style="left:1093.58px;top:914.51px;font-size:12.6px;color:#e4e4e8;transform:scaleY(1.02);transform-origin:0 10.49px;">cloudflare</div>
<div class="t" style="left:1038.58px;top:941.25px;font-size:8.83px;color:#6c707c;transform:scaleY(1.05);transform-origin:0 7.35px;">title:</div>
<div class="t" style="left:1077.67px;top:938.11px;font-size:12.6px;color:#e4e4e8;transform:scaleY(1.02);transform-origin:0 10.49px;">Direct IP access not allowed</div>
<div class="t" style="left:1038.58px;top:964.15px;font-size:8.83px;color:#6c707c;transform:scaleY(1.05);transform-origin:0 7.35px;">tech:</div>
<div class="t" style="left:1072.37px;top:961.01px;font-size:12.6px;color:#e4e4e8;transform:scaleY(1.02);transform-origin:0 10.49px;">Cloudflare</div>
</body></html>
